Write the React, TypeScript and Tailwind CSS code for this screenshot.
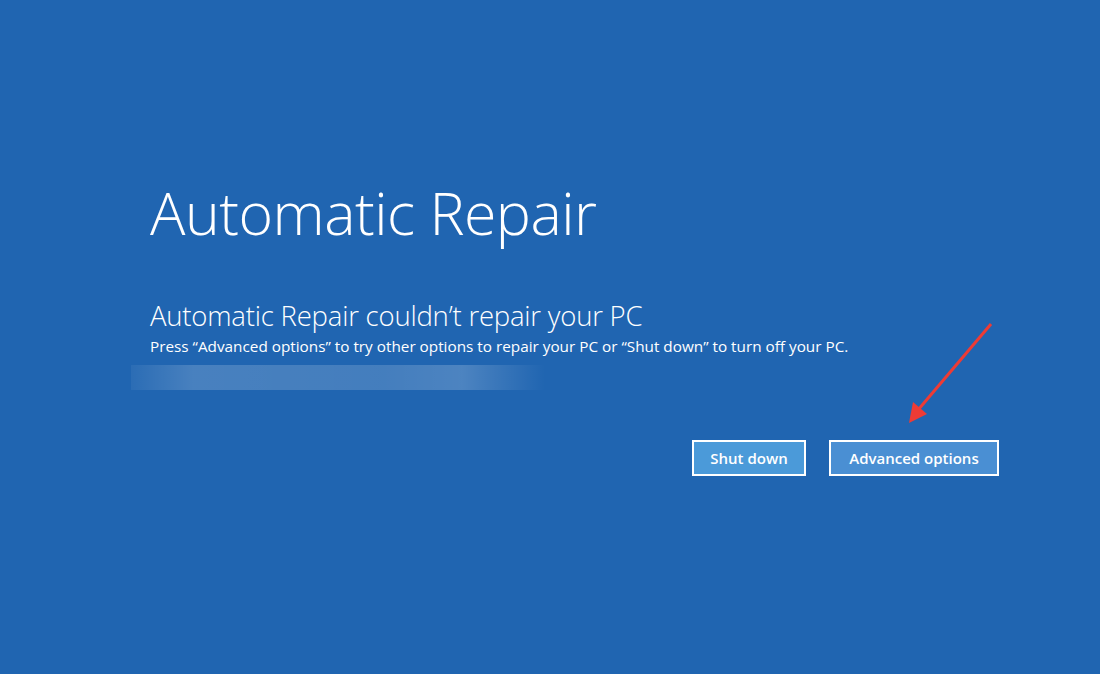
export default function App() {
  return (
    <div className="relative h-[674px] w-[1100px] overflow-hidden bg-[#2065b1] font-['Open_Sans',sans-serif] text-white">
      <div className="flex flex-col pl-[150px] pt-[183px]">
        <h1 className="text-[59px] font-light leading-none tracking-[-0.5px]">Automatic Repair</h1>
        <h2 className="mt-[60px] text-[27.5px] font-light leading-none tracking-[-0.2px]">
          Automatic Repair couldn’t repair your PC
        </h2>
        <p className="mt-[9px] text-[15.3px] leading-none">
          Press “Advanced options” to try other options to repair your PC or “Shut down” to turn off your PC.
        </p>
        <div className="ml-[-19px] mt-[11px] h-[25px] w-[414px] bg-[linear-gradient(90deg,rgba(255,255,255,0.05),rgba(255,255,255,0.18)_15%,rgba(255,255,255,0.16)_60%,rgba(255,255,255,0.2)_80%,rgba(255,255,255,0))]" />
      </div>
      <div className="mt-[50px] flex justify-end gap-[23px] pr-[101px]">
        <button className="h-[36px] w-[114px] border-2 border-white bg-[#4b9ad9] text-[15px] font-semibold text-white">
          Shut down
        </button>
        <button className="h-[36px] w-[170px] border-2 border-white bg-[#4a8fd3] text-[15px] font-semibold text-white">
          Advanced options
        </button>
      </div>
      <svg className="absolute left-0 top-0" width="1100" height="674" viewBox="0 0 1100 674">
        <line x1="991" y1="324" x2="918" y2="410" stroke="#ee3b35" strokeWidth="3" />
        <polygon points="909,423 913,402 927,414" fill="#ee3b35" />
      </svg>
    </div>
  );
}
